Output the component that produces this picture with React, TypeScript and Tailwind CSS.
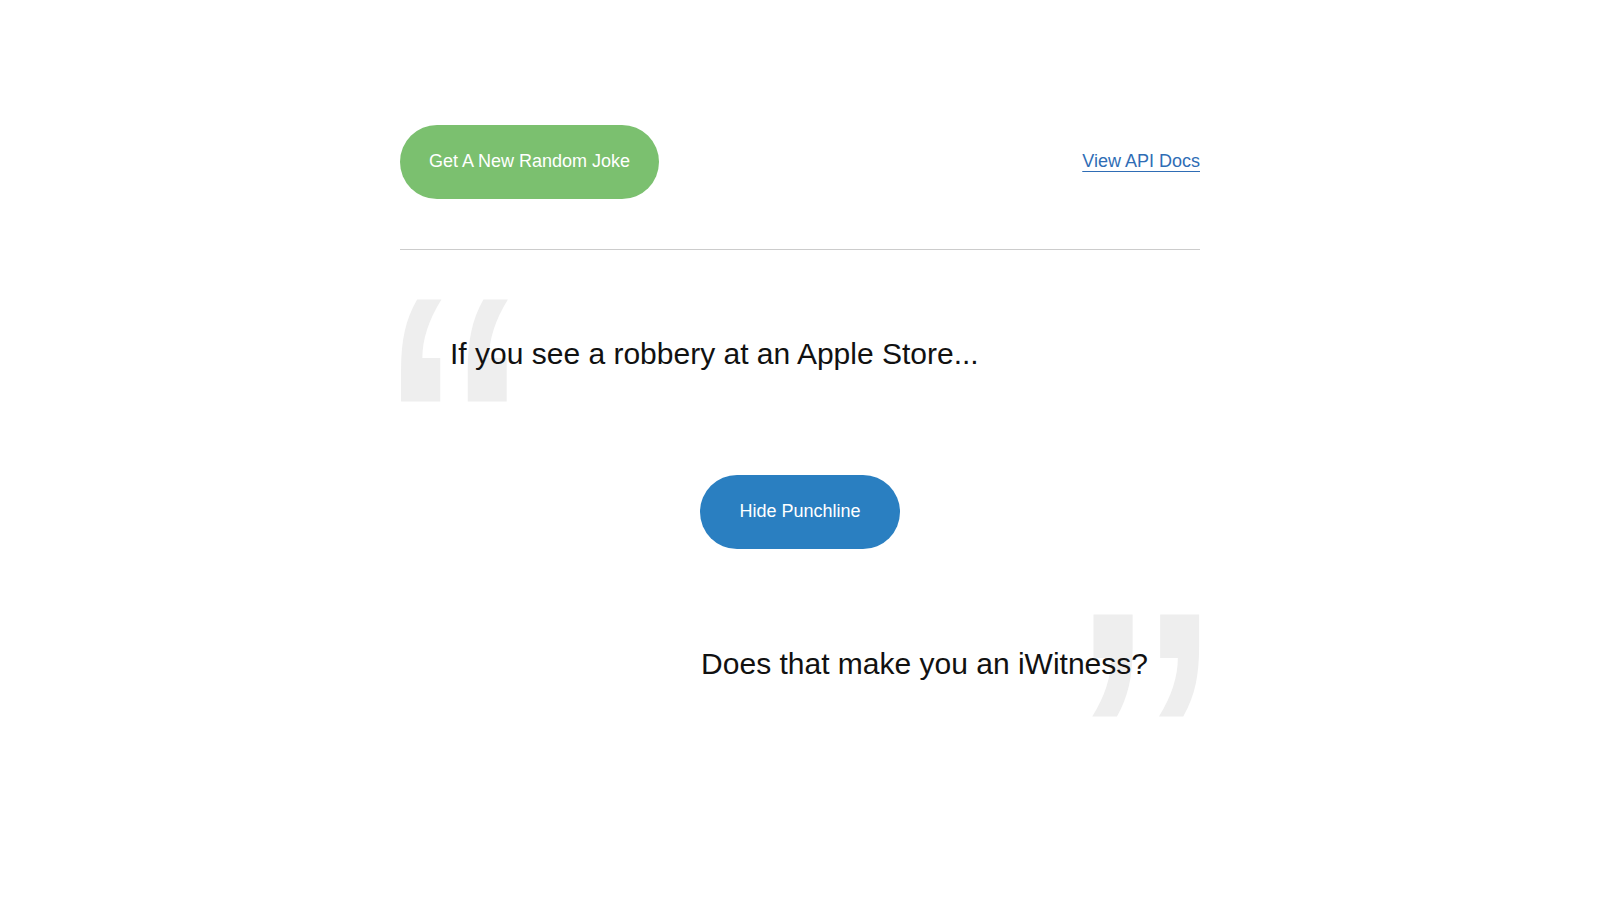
import { useState } from "react";

const font = { fontFamily: '"Liberation Sans", Arial, Helvetica, sans-serif' };

export default function App() {
  const [showPunchline, setShowPunchline] = useState(true);

  return (
    <div className="min-h-screen overflow-hidden bg-white text-[#111]" style={font}>
      <div className="mx-auto w-[800px] pt-[125px]">
        {/* Header */}
        <div className="flex items-center justify-between">
          <button className="h-[74px] w-[259px] rounded-full bg-[#7bc06f] pb-px text-[18px] text-white">
            Get A New Random Joke
          </button>
          <a
            href="#"
            className="mb-0.5 text-[18px] text-[#2f6db5] underline decoration-1 underline-offset-4"
          >
            View API Docs
          </a>
        </div>

        <hr className="mt-[50px] border-0 border-t border-[#cccccc]" />

        {/* Setup */}
        <div className="relative mt-[86px]">
          <div aria-hidden className="absolute left-0 top-[-37px] h-[103px] w-[108px] overflow-hidden">
            <span className="absolute left-[-14px] top-[-72px] origin-left scale-x-90 select-none text-[457px] leading-none text-[#eeeeee]">
              &#8220;
            </span>
          </div>
          <p className="relative pl-[50px] text-[30px] leading-[36px]">
            If you see a robbery at an Apple Store...
          </p>
        </div>

        {/* Toggle */}
        <div className="mt-[103px] flex justify-center">
          <button
            onClick={() => setShowPunchline(!showPunchline)}
            className="h-[74px] w-[200px] rounded-full bg-[#2a7fc1] pb-px text-[18px] text-white"
          >
            {showPunchline ? "Hide Punchline" : "Show Punchline"}
          </button>
        </div>

        {/* Punchline */}
        {showPunchline && (
          <div className="relative mt-[97px]">
            <div aria-hidden className="absolute right-0 top-[-32px] h-[104px] w-[108px] overflow-hidden">
              <span className="absolute right-[-14px] top-[-72px] origin-right scale-x-90 select-none text-[457px] leading-none text-[#eeeeee]">
                &#8221;
              </span>
            </div>
            <p className="relative pr-[52px] text-right text-[30px] leading-[36px]">
              Does that make you an iWitness?
            </p>
          </div>
        )}
      </div>
    </div>
  );
}
